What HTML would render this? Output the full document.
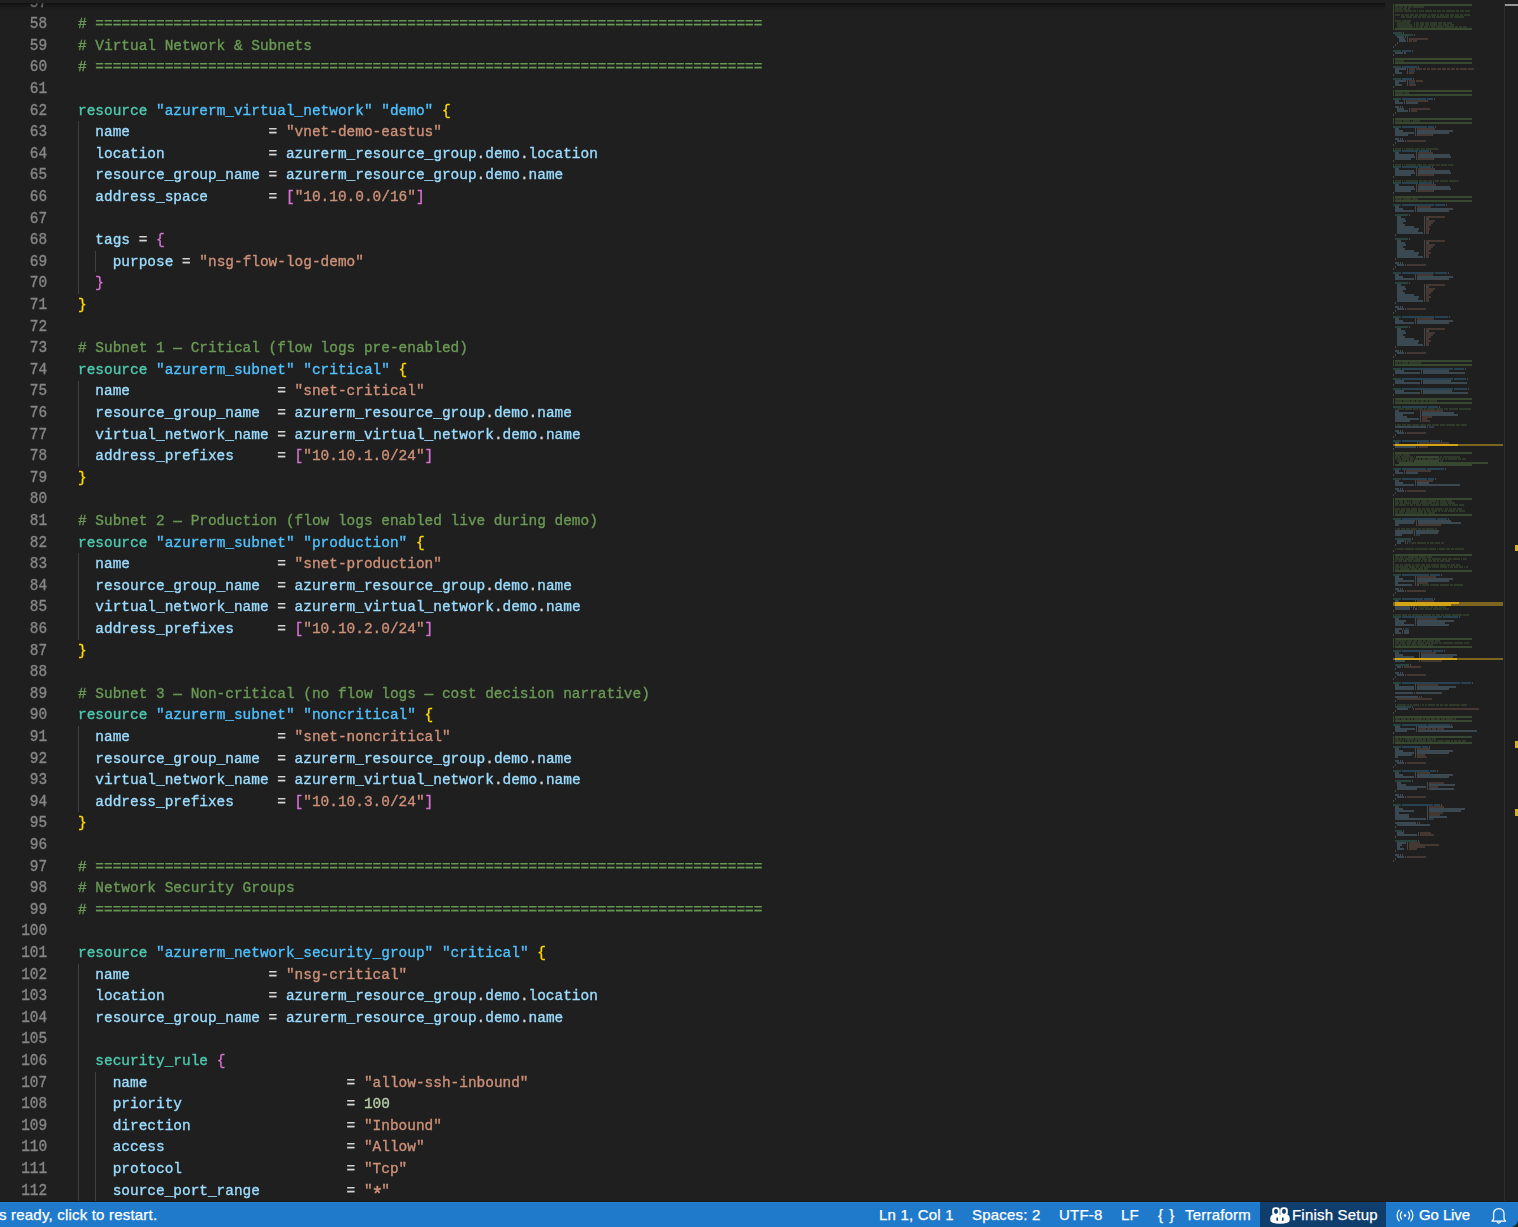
<!DOCTYPE html>
<html><head><meta charset="utf-8"><style>
*{margin:0;padding:0;box-sizing:border-box}
html,body{width:1518px;height:1227px;overflow:hidden;background:#1f1f1f}
body{position:relative;font-family:"Liberation Mono",monospace}
.ed{will-change:transform}
.ln,.nm{transform:scaleY(1.08);transform-origin:0 14.65px;-webkit-text-stroke:0.35px currentColor}
.ln{transform:scaleY(1.0)}
.ed{position:absolute;left:0;top:3px;width:1385px;height:1199px;overflow:hidden;background:#1f1f1f}
.ln,.nm{position:absolute;height:21.6px;line-height:21.6px;font-size:14.45px;white-space:pre;color:#d4d4d4}
.ln{left:78.0px}
.nm{left:0;width:47.2px;text-align:right;color:#858585}
.gd{position:absolute;width:1px;background:#3e4044}
.c{color:#6a9955}.k{color:#4ec9b0}.t{color:#4fc1ff}.a{color:#9cdcfe}.s{color:#ce9178}.n{color:#b5cea8}
.ast{display:inline-block;transform:translateY(4.5px) scale(1.35)}
.b1{color:#ffd700}.b2{color:#da70d6}.b3{color:#179fff}
.shadow{position:absolute;left:0;top:0;width:1385px;height:6px;box-shadow:inset 0 6px 6px -6px #000}
.mm{position:absolute;left:1385px;top:0;width:120px;height:1202px;background:#1f1f1f}
.ruler{position:absolute;left:1504px;top:3px;width:14px;height:1199px;border-left:1px solid #2e2e2e}
.mmsvg{position:absolute;left:0;top:0}
.sb{position:absolute;left:0;top:1202px;width:1518px;height:25px;background:#1f7acc;color:#fff;font-family:"Liberation Sans",sans-serif;font-size:15px;line-height:25px;white-space:pre}
.sb .br{font-family:"Liberation Sans",sans-serif;font-size:15px;letter-spacing:1px}
.sb span{position:absolute;top:0;-webkit-text-stroke:0.25px #fff;letter-spacing:0.2px}
</style></head><body>
<div class="ed">
<div class="nm" style="top:-10.50px">57</div>
<div class="nm" style="top:11.10px">58</div>
<div class="nm" style="top:32.70px">59</div>
<div class="nm" style="top:54.30px">60</div>
<div class="nm" style="top:75.90px">61</div>
<div class="nm" style="top:97.50px">62</div>
<div class="nm" style="top:119.10px">63</div>
<div class="nm" style="top:140.70px">64</div>
<div class="nm" style="top:162.30px">65</div>
<div class="nm" style="top:183.90px">66</div>
<div class="nm" style="top:205.50px">67</div>
<div class="nm" style="top:227.10px">68</div>
<div class="nm" style="top:248.70px">69</div>
<div class="nm" style="top:270.30px">70</div>
<div class="nm" style="top:291.90px">71</div>
<div class="nm" style="top:313.50px">72</div>
<div class="nm" style="top:335.10px">73</div>
<div class="nm" style="top:356.70px">74</div>
<div class="nm" style="top:378.30px">75</div>
<div class="nm" style="top:399.90px">76</div>
<div class="nm" style="top:421.50px">77</div>
<div class="nm" style="top:443.10px">78</div>
<div class="nm" style="top:464.70px">79</div>
<div class="nm" style="top:486.30px">80</div>
<div class="nm" style="top:507.90px">81</div>
<div class="nm" style="top:529.50px">82</div>
<div class="nm" style="top:551.10px">83</div>
<div class="nm" style="top:572.70px">84</div>
<div class="nm" style="top:594.30px">85</div>
<div class="nm" style="top:615.90px">86</div>
<div class="nm" style="top:637.50px">87</div>
<div class="nm" style="top:659.10px">88</div>
<div class="nm" style="top:680.70px">89</div>
<div class="nm" style="top:702.30px">90</div>
<div class="nm" style="top:723.90px">91</div>
<div class="nm" style="top:745.50px">92</div>
<div class="nm" style="top:767.10px">93</div>
<div class="nm" style="top:788.70px">94</div>
<div class="nm" style="top:810.30px">95</div>
<div class="nm" style="top:831.90px">96</div>
<div class="nm" style="top:853.50px">97</div>
<div class="nm" style="top:875.10px">98</div>
<div class="nm" style="top:896.70px">99</div>
<div class="nm" style="top:918.30px">100</div>
<div class="nm" style="top:939.90px">101</div>
<div class="nm" style="top:961.50px">102</div>
<div class="nm" style="top:983.10px">103</div>
<div class="nm" style="top:1004.70px">104</div>
<div class="nm" style="top:1026.30px">105</div>
<div class="nm" style="top:1047.90px">106</div>
<div class="nm" style="top:1069.50px">107</div>
<div class="nm" style="top:1091.10px">108</div>
<div class="nm" style="top:1112.70px">109</div>
<div class="nm" style="top:1134.30px">110</div>
<div class="nm" style="top:1155.90px">111</div>
<div class="nm" style="top:1177.50px">112</div>
<div class="nm" style="top:1199.10px">113</div>
<div class="gd" style="left:78.00px;top:118.30px;height:172.80px"></div>
<div class="gd" style="left:95.34px;top:247.90px;height:21.60px"></div>
<div class="gd" style="left:78.00px;top:377.50px;height:86.40px"></div>
<div class="gd" style="left:78.00px;top:550.30px;height:86.40px"></div>
<div class="gd" style="left:78.00px;top:723.10px;height:86.40px"></div>
<div class="gd" style="left:78.00px;top:960.70px;height:259.20px"></div>
<div class="gd" style="left:95.34px;top:1068.70px;height:151.20px"></div>
<div class="ln" style="top:-10.50px"><span class="c"></span></div>
<div class="ln" style="top:11.10px"><span class="c"># =============================================================================</span></div>
<div class="ln" style="top:32.70px"><span class="c"># Virtual Network &amp; Subnets</span></div>
<div class="ln" style="top:54.30px"><span class="c"># =============================================================================</span></div>
<div class="ln" style="top:75.90px"></div>
<div class="ln" style="top:97.50px"><span class="k">resource</span> <span class="t">&quot;azurerm_virtual_network&quot;</span> <span class="t">&quot;demo&quot;</span> <span class="b1">{</span></div>
<div class="ln" style="top:119.10px">  <span class="a">name</span>                = <span class="s">&quot;vnet-demo-eastus&quot;</span></div>
<div class="ln" style="top:140.70px">  <span class="a">location</span>            = <span class="a">azurerm_resource_group</span>.<span class="a">demo</span>.<span class="a">location</span></div>
<div class="ln" style="top:162.30px">  <span class="a">resource_group_name</span> = <span class="a">azurerm_resource_group</span>.<span class="a">demo</span>.<span class="a">name</span></div>
<div class="ln" style="top:183.90px">  <span class="a">address_space</span>       = <span class="b2">[</span><span class="s">&quot;10.10.0.0/16&quot;</span><span class="b2">]</span></div>
<div class="ln" style="top:205.50px"></div>
<div class="ln" style="top:227.10px">  <span class="a">tags</span> = <span class="b2">{</span></div>
<div class="ln" style="top:248.70px">    <span class="a">purpose</span> = <span class="s">&quot;nsg-flow-log-demo&quot;</span></div>
<div class="ln" style="top:270.30px">  <span class="b2">}</span></div>
<div class="ln" style="top:291.90px"><span class="b1">}</span></div>
<div class="ln" style="top:313.50px"></div>
<div class="ln" style="top:335.10px"><span class="c"># Subnet 1 — Critical (flow logs pre-enabled)</span></div>
<div class="ln" style="top:356.70px"><span class="k">resource</span> <span class="t">&quot;azurerm_subnet&quot;</span> <span class="t">&quot;critical&quot;</span> <span class="b1">{</span></div>
<div class="ln" style="top:378.30px">  <span class="a">name</span>                 = <span class="s">&quot;snet-critical&quot;</span></div>
<div class="ln" style="top:399.90px">  <span class="a">resource_group_name</span>  = <span class="a">azurerm_resource_group</span>.<span class="a">demo</span>.<span class="a">name</span></div>
<div class="ln" style="top:421.50px">  <span class="a">virtual_network_name</span> = <span class="a">azurerm_virtual_network</span>.<span class="a">demo</span>.<span class="a">name</span></div>
<div class="ln" style="top:443.10px">  <span class="a">address_prefixes</span>     = <span class="b2">[</span><span class="s">&quot;10.10.1.0/24&quot;</span><span class="b2">]</span></div>
<div class="ln" style="top:464.70px"><span class="b1">}</span></div>
<div class="ln" style="top:486.30px"></div>
<div class="ln" style="top:507.90px"><span class="c"># Subnet 2 — Production (flow logs enabled live during demo)</span></div>
<div class="ln" style="top:529.50px"><span class="k">resource</span> <span class="t">&quot;azurerm_subnet&quot;</span> <span class="t">&quot;production&quot;</span> <span class="b1">{</span></div>
<div class="ln" style="top:551.10px">  <span class="a">name</span>                 = <span class="s">&quot;snet-production&quot;</span></div>
<div class="ln" style="top:572.70px">  <span class="a">resource_group_name</span>  = <span class="a">azurerm_resource_group</span>.<span class="a">demo</span>.<span class="a">name</span></div>
<div class="ln" style="top:594.30px">  <span class="a">virtual_network_name</span> = <span class="a">azurerm_virtual_network</span>.<span class="a">demo</span>.<span class="a">name</span></div>
<div class="ln" style="top:615.90px">  <span class="a">address_prefixes</span>     = <span class="b2">[</span><span class="s">&quot;10.10.2.0/24&quot;</span><span class="b2">]</span></div>
<div class="ln" style="top:637.50px"><span class="b1">}</span></div>
<div class="ln" style="top:659.10px"></div>
<div class="ln" style="top:680.70px"><span class="c"># Subnet 3 — Non-critical (no flow logs — cost decision narrative)</span></div>
<div class="ln" style="top:702.30px"><span class="k">resource</span> <span class="t">&quot;azurerm_subnet&quot;</span> <span class="t">&quot;noncritical&quot;</span> <span class="b1">{</span></div>
<div class="ln" style="top:723.90px">  <span class="a">name</span>                 = <span class="s">&quot;snet-noncritical&quot;</span></div>
<div class="ln" style="top:745.50px">  <span class="a">resource_group_name</span>  = <span class="a">azurerm_resource_group</span>.<span class="a">demo</span>.<span class="a">name</span></div>
<div class="ln" style="top:767.10px">  <span class="a">virtual_network_name</span> = <span class="a">azurerm_virtual_network</span>.<span class="a">demo</span>.<span class="a">name</span></div>
<div class="ln" style="top:788.70px">  <span class="a">address_prefixes</span>     = <span class="b2">[</span><span class="s">&quot;10.10.3.0/24&quot;</span><span class="b2">]</span></div>
<div class="ln" style="top:810.30px"><span class="b1">}</span></div>
<div class="ln" style="top:831.90px"></div>
<div class="ln" style="top:853.50px"><span class="c"># =============================================================================</span></div>
<div class="ln" style="top:875.10px"><span class="c"># Network Security Groups</span></div>
<div class="ln" style="top:896.70px"><span class="c"># =============================================================================</span></div>
<div class="ln" style="top:918.30px"></div>
<div class="ln" style="top:939.90px"><span class="k">resource</span> <span class="t">&quot;azurerm_network_security_group&quot;</span> <span class="t">&quot;critical&quot;</span> <span class="b1">{</span></div>
<div class="ln" style="top:961.50px">  <span class="a">name</span>                = <span class="s">&quot;nsg-critical&quot;</span></div>
<div class="ln" style="top:983.10px">  <span class="a">location</span>            = <span class="a">azurerm_resource_group</span>.<span class="a">demo</span>.<span class="a">location</span></div>
<div class="ln" style="top:1004.70px">  <span class="a">resource_group_name</span> = <span class="a">azurerm_resource_group</span>.<span class="a">demo</span>.<span class="a">name</span></div>
<div class="ln" style="top:1026.30px"></div>
<div class="ln" style="top:1047.90px">  <span class="k">security_rule</span> <span class="b2">{</span></div>
<div class="ln" style="top:1069.50px">    <span class="a">name</span>                       = <span class="s">&quot;allow-ssh-inbound&quot;</span></div>
<div class="ln" style="top:1091.10px">    <span class="a">priority</span>                   = <span class="n">100</span></div>
<div class="ln" style="top:1112.70px">    <span class="a">direction</span>                  = <span class="s">&quot;Inbound&quot;</span></div>
<div class="ln" style="top:1134.30px">    <span class="a">access</span>                     = <span class="s">&quot;Allow&quot;</span></div>
<div class="ln" style="top:1155.90px">    <span class="a">protocol</span>                   = <span class="s">&quot;Tcp&quot;</span></div>
<div class="ln" style="top:1177.50px">    <span class="a">source_port_range</span>          = <span class="s">&quot;<span class="ast">*</span>&quot;</span></div>
<div class="ln" style="top:1199.10px">    <span class="a">destination_port_range</span>     = <span class="s">&quot;22&quot;</span></div>
<div class="shadow"></div>
</div>
<div class="mm"></div>
<svg class="mmsvg" width="1518" height="1202" viewBox="0 0 1518 1202">
<g><path fill="#6a9955" opacity="0.30" d="M1395 6.2h3v1.6h-3zM1399 6.2h4v1.6h-4zM1404 6.2h3v1.6h-3zM1408 6.2h4v1.6h-4zM1413 6.2h11v1.6h-11zM1395 8.2h7v1.6h-7zM1403 8.2h4v1.6h-4zM1408 8.2h2v1.6h-2zM1395 10.2h8v1.6h-8zM1404 10.2h8v1.6h-8zM1413 10.2h3v1.6h-3zM1417 10.2h1v1.6h-1zM1419 10.2h5v1.6h-5zM1425 10.2h7v1.6h-7zM1433 10.2h3v1.6h-3zM1437 10.2h4v1.6h-4zM1442 10.2h3v1.6h-3zM1446 10.2h9v1.6h-9zM1456 10.2h3v1.6h-3zM1460 10.2h4v1.6h-4zM1465 10.2h5v1.6h-5zM1395 14.2h5v1.6h-5zM1401 14.2h3v1.6h-3zM1405 14.2h4v1.6h-4zM1410 14.2h4v1.6h-4zM1415 14.2h3v1.6h-3zM1419 14.2h8v1.6h-8zM1428 14.2h2v1.6h-2zM1431 14.2h5v1.6h-5zM1437 14.2h2v1.6h-2zM1440 14.2h4v1.6h-4zM1445 14.2h4v1.6h-4zM1450 14.2h4v1.6h-4zM1455 14.2h4v1.6h-4zM1460 14.2h3v1.6h-3zM1464 14.2h6v1.6h-6zM1401 16.2h4v1.6h-4zM1406 16.2h6v1.6h-6zM1413 16.2h4v1.6h-4zM1418 16.2h3v1.6h-3zM1422 16.2h4v1.6h-4zM1427 16.2h4v1.6h-4zM1432 16.2h3v1.6h-3zM1436 16.2h13v1.6h-13zM1450 16.2h3v1.6h-3zM1454 16.2h10v1.6h-10zM1395 20.2h6v1.6h-6zM1402 20.2h9v1.6h-9zM1397 22.2h13v1.6h-13zM1414 22.2h1v1.6h-1zM1416 22.2h3v1.6h-3zM1420 22.2h4v1.6h-4zM1425 22.2h4v1.6h-4zM1430 22.2h7v1.6h-7zM1438 22.2h4v1.6h-4zM1443 22.2h3v1.6h-3zM1447 22.2h5v1.6h-5zM1397 24.2h15v1.6h-15zM1414 24.2h1v1.6h-1zM1416 24.2h3v1.6h-3zM1420 24.2h4v1.6h-4zM1425 24.2h4v1.6h-4zM1430 24.2h7v1.6h-7zM1438 24.2h4v1.6h-4zM1443 24.2h6v1.6h-6zM1450 24.2h4v1.6h-4zM1397 26.2h16v1.6h-16zM1414 26.2h1v1.6h-1zM1416 26.2h2v1.6h-2zM1419 26.2h4v1.6h-4zM1424 26.2h4v1.6h-4zM1429 26.2h1v1.6h-1zM1431 26.2h4v1.6h-4zM1436 26.2h8v1.6h-8zM1445 26.2h9v1.6h-9zM1455 26.2h3v1.6h-3zM1459 26.2h3v1.6h-3zM1463 26.2h4v1.6h-4zM1395 60.2h9v1.6h-9zM1395 92.2h8v1.6h-8zM1404 92.2h5v1.6h-5zM1395 120.2h7v1.6h-7zM1403 120.2h7v1.6h-7zM1411 120.2h1v1.6h-1zM1413 120.2h7v1.6h-7zM1395 148.2h6v1.6h-6zM1402 148.2h1v1.6h-1zM1404 148.2h1v1.6h-1zM1406 148.2h8v1.6h-8zM1415 148.2h5v1.6h-5zM1421 148.2h4v1.6h-4zM1426 148.2h12v1.6h-12zM1395 164.2h6v1.6h-6zM1402 164.2h1v1.6h-1zM1404 164.2h1v1.6h-1zM1406 164.2h10v1.6h-10zM1417 164.2h5v1.6h-5zM1423 164.2h4v1.6h-4zM1428 164.2h7v1.6h-7zM1436 164.2h4v1.6h-4zM1441 164.2h6v1.6h-6zM1448 164.2h5v1.6h-5zM1395 180.2h6v1.6h-6zM1402 180.2h1v1.6h-1zM1404 180.2h1v1.6h-1zM1406 180.2h12v1.6h-12zM1419 180.2h3v1.6h-3zM1423 180.2h4v1.6h-4zM1428 180.2h4v1.6h-4zM1433 180.2h1v1.6h-1zM1435 180.2h4v1.6h-4zM1440 180.2h8v1.6h-8zM1449 180.2h10v1.6h-10zM1395 198.2h7v1.6h-7zM1403 198.2h8v1.6h-8zM1412 198.2h6v1.6h-6zM1395 362.2h3v1.6h-3zM1399 362.2h2v1.6h-2zM1402 362.2h6v1.6h-6zM1409 362.2h12v1.6h-12zM1395 400.2h7v1.6h-7zM1403 400.2h7v1.6h-7zM1411 400.2h4v1.6h-4zM1416 400.2h3v1.6h-3zM1420 400.2h4v1.6h-4zM1425 400.2h3v1.6h-3zM1429 400.2h8v1.6h-8zM1395 408.2h1v1.6h-1zM1397 408.2h7v1.6h-7zM1405 408.2h7v1.6h-7zM1413 408.2h5v1.6h-5zM1419 408.2h4v1.6h-4zM1424 408.2h2v1.6h-2zM1427 408.2h8v1.6h-8zM1436 408.2h7v1.6h-7zM1444 408.2h4v1.6h-4zM1449 408.2h9v1.6h-9zM1459 408.2h12v1.6h-12zM1395 424.2h1v1.6h-1zM1397 424.2h4v1.6h-4zM1402 424.2h4v1.6h-4zM1407 424.2h4v1.6h-4zM1412 424.2h7v1.6h-7zM1420 424.2h6v1.6h-6zM1427 424.2h4v1.6h-4zM1432 424.2h7v1.6h-7zM1440 424.2h5v1.6h-5zM1446 424.2h9v1.6h-9zM1456 424.2h4v1.6h-4zM1461 424.2h6v1.6h-6zM1395 454.2h7v1.6h-7zM1403 454.2h7v1.6h-7zM1395 456.2h5v1.6h-5zM1401 456.2h12v1.6h-12zM1414 456.2h1v1.6h-1zM1440 456.2h2v1.6h-2zM1443 456.2h17v1.6h-17zM1395 458.2h2v1.6h-2zM1398 458.2h3v1.6h-3zM1402 458.2h7v1.6h-7zM1410 458.2h4v1.6h-4zM1415 458.2h3v1.6h-3zM1419 458.2h2v1.6h-2zM1422 458.2h4v1.6h-4zM1427 458.2h7v1.6h-7zM1435 458.2h6v1.6h-6zM1442 458.2h2v1.6h-2zM1445 458.2h2v1.6h-2zM1448 458.2h9v1.6h-9zM1458 458.2h3v1.6h-3zM1462 458.2h4v1.6h-4zM1397 460.2h9v1.6h-9zM1407 460.2h6v1.6h-6zM1440 460.2h3v1.6h-3zM1395 500.2h3v1.6h-3zM1399 500.2h4v1.6h-4zM1404 500.2h3v1.6h-3zM1408 500.2h1v1.6h-1zM1410 500.2h1v1.6h-1zM1412 500.2h8v1.6h-8zM1421 500.2h6v1.6h-6zM1428 500.2h8v1.6h-8zM1437 500.2h2v1.6h-2zM1440 500.2h6v1.6h-6zM1447 500.2h5v1.6h-5zM1395 502.2h4v1.6h-4zM1400 502.2h3v1.6h-3zM1404 502.2h7v1.6h-7zM1412 502.2h7v1.6h-7zM1420 502.2h12v1.6h-12zM1433 502.2h2v1.6h-2zM1436 502.2h3v1.6h-3zM1440 502.2h7v1.6h-7zM1448 502.2h7v1.6h-7zM1395 504.2h3v1.6h-3zM1399 504.2h7v1.6h-7zM1407 504.2h2v1.6h-2zM1410 504.2h3v1.6h-3zM1414 504.2h1v1.6h-1zM1416 504.2h5v1.6h-5zM1422 504.2h7v1.6h-7zM1430 504.2h9v1.6h-9zM1440 504.2h8v1.6h-8zM1449 504.2h2v1.6h-2zM1452 504.2h6v1.6h-6zM1459 504.2h5v1.6h-5zM1395 508.2h5v1.6h-5zM1401 508.2h4v1.6h-4zM1406 508.2h4v1.6h-4zM1411 508.2h6v1.6h-6zM1418 508.2h3v1.6h-3zM1422 508.2h3v1.6h-3zM1426 508.2h4v1.6h-4zM1431 508.2h3v1.6h-3zM1435 508.2h7v1.6h-7zM1443 508.2h1v1.6h-1zM1445 508.2h3v1.6h-3zM1449 508.2h3v1.6h-3zM1453 508.2h3v1.6h-3zM1457 508.2h5v1.6h-5zM1395 510.2h3v1.6h-3zM1399 510.2h6v1.6h-6zM1406 510.2h11v1.6h-11zM1418 510.2h5v1.6h-5zM1424 510.2h2v1.6h-2zM1427 510.2h4v1.6h-4zM1432 510.2h5v1.6h-5zM1438 510.2h2v1.6h-2zM1441 510.2h2v1.6h-2zM1444 510.2h3v1.6h-3zM1448 510.2h7v1.6h-7zM1456 510.2h2v1.6h-2zM1459 510.2h6v1.6h-6zM1395 512.2h3v1.6h-3zM1399 512.2h5v1.6h-5zM1405 512.2h18v1.6h-18zM1424 512.2h3v1.6h-3zM1428 512.2h7v1.6h-7zM1395 528.2h1v1.6h-1zM1397 528.2h3v1.6h-3zM1401 528.2h4v1.6h-4zM1406 528.2h4v1.6h-4zM1411 528.2h6v1.6h-6zM1418 528.2h3v1.6h-3zM1422 528.2h3v1.6h-3zM1426 528.2h8v1.6h-8zM1435 528.2h2v1.6h-2zM1409 542.2h1v1.6h-1zM1411 542.2h5v1.6h-5zM1417 542.2h9v1.6h-9zM1427 542.2h2v1.6h-2zM1430 542.2h4v1.6h-4zM1435 542.2h5v1.6h-5zM1441 542.2h3v1.6h-3zM1395 548.2h1v1.6h-1zM1397 548.2h7v1.6h-7zM1405 548.2h9v1.6h-9zM1415 548.2h13v1.6h-13zM1429 548.2h7v1.6h-7zM1437 548.2h1v1.6h-1zM1439 548.2h6v1.6h-6zM1446 548.2h4v1.6h-4zM1451 548.2h3v1.6h-3zM1455 548.2h9v1.6h-9zM1395 556.2h4v1.6h-4zM1400 556.2h3v1.6h-3zM1404 556.2h1v1.6h-1zM1406 556.2h1v1.6h-1zM1408 556.2h10v1.6h-10zM1419 556.2h7v1.6h-7zM1427 556.2h5v1.6h-5zM1395 558.2h9v1.6h-9zM1405 558.2h9v1.6h-9zM1415 558.2h6v1.6h-6zM1422 558.2h5v1.6h-5zM1428 558.2h3v1.6h-3zM1432 558.2h9v1.6h-9zM1442 558.2h5v1.6h-5zM1448 558.2h4v1.6h-4zM1453 558.2h7v1.6h-7zM1461 558.2h1v1.6h-1zM1463 558.2h4v1.6h-4zM1395 560.2h2v1.6h-2zM1398 560.2h4v1.6h-4zM1403 560.2h4v1.6h-4zM1408 560.2h4v1.6h-4zM1413 560.2h7v1.6h-7zM1421 560.2h2v1.6h-2zM1424 560.2h3v1.6h-3zM1428 560.2h4v1.6h-4zM1433 560.2h3v1.6h-3zM1437 560.2h2v1.6h-2zM1440 560.2h4v1.6h-4zM1445 560.2h5v1.6h-5zM1395 564.2h4v1.6h-4zM1400 564.2h3v1.6h-3zM1404 564.2h7v1.6h-7zM1412 564.2h2v1.6h-2zM1415 564.2h5v1.6h-5zM1421 564.2h4v1.6h-4zM1426 564.2h4v1.6h-4zM1431 564.2h8v1.6h-8zM1440 564.2h6v1.6h-6zM1447 564.2h3v1.6h-3zM1451 564.2h4v1.6h-4zM1456 564.2h4v1.6h-4zM1395 566.2h13v1.6h-13zM1409 566.2h6v1.6h-6zM1416 566.2h3v1.6h-3zM1420 566.2h3v1.6h-3zM1424 566.2h7v1.6h-7zM1432 566.2h7v1.6h-7zM1440 566.2h7v1.6h-7zM1448 566.2h1v1.6h-1zM1450 566.2h3v1.6h-3zM1454 566.2h4v1.6h-4zM1459 566.2h4v1.6h-4zM1464 566.2h1v1.6h-1zM1466 566.2h2v1.6h-2zM1395 568.2h4v1.6h-4zM1400 568.2h10v1.6h-10zM1411 568.2h6v1.6h-6zM1418 568.2h5v1.6h-5zM1424 568.2h4v1.6h-4zM1420 584.2h1v1.6h-1zM1422 584.2h7v1.6h-7zM1430 584.2h9v1.6h-9zM1440 584.2h9v1.6h-9zM1450 584.2h3v1.6h-3zM1454 584.2h9v1.6h-9zM1416 606.2h1v1.6h-1zM1418 606.2h11v1.6h-11zM1430 606.2h3v1.6h-3zM1434 606.2h4v1.6h-4zM1439 606.2h7v1.6h-7zM1418 608.2h1v1.6h-1zM1420 608.2h4v1.6h-4zM1425 608.2h7v1.6h-7zM1433 608.2h9v1.6h-9zM1443 608.2h6v1.6h-6zM1395 614.2h6v1.6h-6zM1402 614.2h5v1.6h-5zM1408 614.2h3v1.6h-3zM1412 614.2h10v1.6h-10zM1423 614.2h8v1.6h-8zM1432 614.2h3v1.6h-3zM1436 614.2h4v1.6h-4zM1441 614.2h3v1.6h-3zM1445 614.2h6v1.6h-6zM1452 614.2h10v1.6h-10zM1463 614.2h6v1.6h-6zM1395 640.2h11v1.6h-11zM1407 640.2h5v1.6h-5zM1413 640.2h4v1.6h-4zM1418 640.2h4v1.6h-4zM1423 640.2h3v1.6h-3zM1427 640.2h7v1.6h-7zM1435 640.2h5v1.6h-5zM1395 642.2h4v1.6h-4zM1400 642.2h5v1.6h-5zM1406 642.2h5v1.6h-5zM1412 642.2h4v1.6h-4zM1417 642.2h7v1.6h-7zM1425 642.2h5v1.6h-5zM1431 642.2h7v1.6h-7zM1439 642.2h3v1.6h-3zM1443 642.2h10v1.6h-10zM1454 642.2h9v1.6h-9zM1464 642.2h5v1.6h-5zM1395 644.2h2v1.6h-2zM1398 644.2h3v1.6h-3zM1402 644.2h4v1.6h-4zM1407 644.2h3v1.6h-3zM1411 644.2h6v1.6h-6zM1418 644.2h9v1.6h-9zM1428 644.2h5v1.6h-5zM1395 704.2h1v1.6h-1zM1397 704.2h9v1.6h-9zM1407 704.2h2v1.6h-2zM1410 704.2h2v1.6h-2zM1413 704.2h6v1.6h-6zM1420 704.2h1v1.6h-1zM1422 704.2h2v1.6h-2zM1425 704.2h2v1.6h-2zM1428 704.2h7v1.6h-7zM1436 704.2h3v1.6h-3zM1440 704.2h3v1.6h-3zM1444 704.2h4v1.6h-4zM1449 704.2h11v1.6h-11zM1461 704.2h6v1.6h-6zM1395 718.2h5v1.6h-5zM1401 718.2h5v1.6h-5zM1407 718.2h3v1.6h-3zM1411 718.2h2v1.6h-2zM1414 718.2h8v1.6h-8zM1423 718.2h2v1.6h-2zM1426 718.2h4v1.6h-4zM1431 718.2h4v1.6h-4zM1436 718.2h4v1.6h-4zM1441 718.2h4v1.6h-4zM1446 718.2h7v1.6h-7zM1454 718.2h2v1.6h-2zM1395 738.2h4v1.6h-4zM1400 738.2h2v1.6h-2zM1403 738.2h1v1.6h-1zM1405 738.2h9v1.6h-9zM1415 738.2h7v1.6h-7zM1423 738.2h3v1.6h-3zM1427 738.2h4v1.6h-4zM1432 738.2h4v1.6h-4zM1395 740.2h6v1.6h-6zM1402 740.2h2v1.6h-2zM1405 740.2h1v1.6h-1zM1407 740.2h3v1.6h-3zM1411 740.2h2v1.6h-2zM1414 740.2h3v1.6h-3zM1418 740.2h8v1.6h-8zM1427 740.2h6v1.6h-6zM1434 740.2h2v1.6h-2zM1437 740.2h7v1.6h-7zM1445 740.2h5v1.6h-5zM1451 740.2h2v1.6h-2zM1454 740.2h3v1.6h-3zM1458 740.2h3v1.6h-3zM1462 740.2h4v1.6h-4z"/><path fill="#6a9955" opacity="0.45" d="M1393 4.2h1v1.6h-1zM1395 4.2h77v1.6h-77zM1393 6.2h1v1.6h-1zM1393 8.2h1v1.6h-1zM1393 10.2h1v1.6h-1zM1393 12.2h1v1.6h-1zM1393 14.2h1v1.6h-1zM1393 16.2h1v1.6h-1zM1393 18.2h1v1.6h-1zM1393 20.2h1v1.6h-1zM1393 22.2h1v1.6h-1zM1393 24.2h1v1.6h-1zM1393 26.2h1v1.6h-1zM1393 28.2h1v1.6h-1zM1395 28.2h77v1.6h-77zM1393 58.2h1v1.6h-1zM1395 58.2h77v1.6h-77zM1393 60.2h1v1.6h-1zM1393 62.2h1v1.6h-1zM1395 62.2h77v1.6h-77zM1393 90.2h1v1.6h-1zM1395 90.2h77v1.6h-77zM1393 92.2h1v1.6h-1zM1393 94.2h1v1.6h-1zM1395 94.2h77v1.6h-77zM1393 118.2h1v1.6h-1zM1395 118.2h77v1.6h-77zM1393 120.2h1v1.6h-1zM1393 122.2h1v1.6h-1zM1395 122.2h77v1.6h-77zM1393 148.2h1v1.6h-1zM1393 164.2h1v1.6h-1zM1393 180.2h1v1.6h-1zM1393 196.2h1v1.6h-1zM1395 196.2h77v1.6h-77zM1393 198.2h1v1.6h-1zM1393 200.2h1v1.6h-1zM1395 200.2h77v1.6h-77zM1393 360.2h1v1.6h-1zM1395 360.2h77v1.6h-77zM1393 362.2h1v1.6h-1zM1393 364.2h1v1.6h-1zM1395 364.2h77v1.6h-77zM1393 398.2h1v1.6h-1zM1395 398.2h77v1.6h-77zM1393 400.2h1v1.6h-1zM1393 402.2h1v1.6h-1zM1395 402.2h77v1.6h-77zM1393 452.2h1v1.6h-1zM1395 452.2h77v1.6h-77zM1393 454.2h1v1.6h-1zM1393 456.2h1v1.6h-1zM1416 456.2h23v1.6h-23zM1393 458.2h1v1.6h-1zM1393 460.2h1v1.6h-1zM1414 460.2h25v1.6h-25zM1393 462.2h1v1.6h-1zM1399 462.2h89v1.6h-89zM1393 464.2h1v1.6h-1zM1395 464.2h77v1.6h-77zM1393 498.2h1v1.6h-1zM1395 498.2h77v1.6h-77zM1393 500.2h1v1.6h-1zM1393 502.2h1v1.6h-1zM1393 504.2h1v1.6h-1zM1393 506.2h1v1.6h-1zM1393 508.2h1v1.6h-1zM1393 510.2h1v1.6h-1zM1393 512.2h1v1.6h-1zM1393 514.2h1v1.6h-1zM1395 514.2h77v1.6h-77zM1393 554.2h1v1.6h-1zM1395 554.2h77v1.6h-77zM1393 556.2h1v1.6h-1zM1393 558.2h1v1.6h-1zM1393 560.2h1v1.6h-1zM1393 562.2h1v1.6h-1zM1393 564.2h1v1.6h-1zM1393 566.2h1v1.6h-1zM1393 568.2h1v1.6h-1zM1393 570.2h1v1.6h-1zM1395 570.2h77v1.6h-77zM1393 614.2h1v1.6h-1zM1393 638.2h1v1.6h-1zM1395 638.2h77v1.6h-77zM1393 640.2h1v1.6h-1zM1393 642.2h1v1.6h-1zM1393 644.2h1v1.6h-1zM1393 646.2h1v1.6h-1zM1395 646.2h77v1.6h-77zM1393 716.2h1v1.6h-1zM1395 716.2h77v1.6h-77zM1393 718.2h1v1.6h-1zM1393 720.2h1v1.6h-1zM1395 720.2h77v1.6h-77zM1393 736.2h1v1.6h-1zM1395 736.2h77v1.6h-77zM1393 738.2h1v1.6h-1zM1393 740.2h1v1.6h-1zM1393 742.2h1v1.6h-1zM1395 742.2h77v1.6h-77z"/><path fill="#4ec9b0" opacity="0.30" d="M1393 32.2h9v1.6h-9zM1395 34.2h18v1.6h-18zM1393 50.2h8v1.6h-8zM1393 66.2h8v1.6h-8zM1393 78.2h8v1.6h-8zM1393 98.2h8v1.6h-8zM1393 126.2h8v1.6h-8zM1393 150.2h8v1.6h-8zM1393 166.2h8v1.6h-8zM1393 182.2h8v1.6h-8zM1393 204.2h8v1.6h-8zM1395 214.2h13v1.6h-13zM1395 238.2h13v1.6h-13zM1393 272.2h8v1.6h-8zM1395 282.2h13v1.6h-13zM1393 316.2h8v1.6h-8zM1395 326.2h13v1.6h-13zM1393 368.2h8v1.6h-8zM1393 378.2h8v1.6h-8zM1393 388.2h8v1.6h-8zM1393 406.2h8v1.6h-8zM1393 440.2h8v1.6h-8zM1393 468.2h8v1.6h-8zM1393 478.2h8v1.6h-8zM1393 518.2h8v1.6h-8zM1395 538.2h16v1.6h-16zM1393 574.2h8v1.6h-8zM1393 598.2h8v1.6h-8zM1393 616.2h8v1.6h-8zM1393 650.2h8v1.6h-8zM1395 664.2h14v1.6h-14zM1393 682.2h8v1.6h-8zM1395 706.2h16v1.6h-16zM1393 724.2h8v1.6h-8zM1393 746.2h8v1.6h-8zM1393 770.2h8v1.6h-8zM1395 780.2h16v1.6h-16zM1393 804.2h8v1.6h-8zM1395 830.2h7v1.6h-7zM1395 840.2h22v1.6h-22z"/><path fill="#d4d4d4" opacity="0.30" d="M1403 32.2h1v1.6h-1zM1414 34.2h1v1.6h-1zM1405 36.2h1v1.6h-1zM1407 36.2h1v1.6h-1zM1407 38.2h1v1.6h-1zM1407 40.2h1v1.6h-1zM1397 42.2h1v1.6h-1zM1395 44.2h1v1.6h-1zM1393 46.2h1v1.6h-1zM1412 50.2h1v1.6h-1zM1404 52.2h1v1.6h-1zM1405 52.2h1v1.6h-1zM1393 54.2h1v1.6h-1zM1418 66.2h1v1.6h-1zM1407 68.2h1v1.6h-1zM1407 70.2h1v1.6h-1zM1407 72.2h1v1.6h-1zM1393 74.2h1v1.6h-1zM1413 78.2h1v1.6h-1zM1407 80.2h1v1.6h-1zM1407 82.2h1v1.6h-1zM1407 84.2h1v1.6h-1zM1393 86.2h1v1.6h-1zM1434 98.2h1v1.6h-1zM1404 100.2h1v1.6h-1zM1404 102.2h1v1.6h-1zM1409 102.2h1v1.6h-1zM1400 106.2h1v1.6h-1zM1402 106.2h1v1.6h-1zM1409 108.2h1v1.6h-1zM1409 110.2h1v1.6h-1zM1395 112.2h1v1.6h-1zM1393 114.2h1v1.6h-1zM1435 126.2h1v1.6h-1zM1415 128.2h1v1.6h-1zM1415 130.2h1v1.6h-1zM1439 130.2h1v1.6h-1zM1444 130.2h1v1.6h-1zM1415 132.2h1v1.6h-1zM1439 132.2h1v1.6h-1zM1444 132.2h1v1.6h-1zM1415 134.2h1v1.6h-1zM1417 134.2h1v1.6h-1zM1432 134.2h1v1.6h-1zM1400 138.2h1v1.6h-1zM1402 138.2h1v1.6h-1zM1405 140.2h1v1.6h-1zM1395 142.2h1v1.6h-1zM1393 144.2h1v1.6h-1zM1430 150.2h1v1.6h-1zM1416 152.2h1v1.6h-1zM1416 154.2h1v1.6h-1zM1440 154.2h1v1.6h-1zM1445 154.2h1v1.6h-1zM1416 156.2h1v1.6h-1zM1441 156.2h1v1.6h-1zM1446 156.2h1v1.6h-1zM1416 158.2h1v1.6h-1zM1418 158.2h1v1.6h-1zM1433 158.2h1v1.6h-1zM1393 160.2h1v1.6h-1zM1432 166.2h1v1.6h-1zM1416 168.2h1v1.6h-1zM1416 170.2h1v1.6h-1zM1440 170.2h1v1.6h-1zM1445 170.2h1v1.6h-1zM1416 172.2h1v1.6h-1zM1441 172.2h1v1.6h-1zM1446 172.2h1v1.6h-1zM1416 174.2h1v1.6h-1zM1418 174.2h1v1.6h-1zM1433 174.2h1v1.6h-1zM1393 176.2h1v1.6h-1zM1433 182.2h1v1.6h-1zM1416 184.2h1v1.6h-1zM1416 186.2h1v1.6h-1zM1440 186.2h1v1.6h-1zM1445 186.2h1v1.6h-1zM1416 188.2h1v1.6h-1zM1441 188.2h1v1.6h-1zM1446 188.2h1v1.6h-1zM1416 190.2h1v1.6h-1zM1418 190.2h1v1.6h-1zM1433 190.2h1v1.6h-1zM1393 192.2h1v1.6h-1zM1446 204.2h1v1.6h-1zM1415 206.2h1v1.6h-1zM1415 208.2h1v1.6h-1zM1439 208.2h1v1.6h-1zM1444 208.2h1v1.6h-1zM1415 210.2h1v1.6h-1zM1439 210.2h1v1.6h-1zM1444 210.2h1v1.6h-1zM1409 214.2h1v1.6h-1zM1424 216.2h1v1.6h-1zM1424 218.2h1v1.6h-1zM1424 220.2h1v1.6h-1zM1424 222.2h1v1.6h-1zM1424 224.2h1v1.6h-1zM1424 226.2h1v1.6h-1zM1424 228.2h1v1.6h-1zM1424 230.2h1v1.6h-1zM1424 232.2h1v1.6h-1zM1395 234.2h1v1.6h-1zM1409 238.2h1v1.6h-1zM1424 240.2h1v1.6h-1zM1424 242.2h1v1.6h-1zM1424 244.2h1v1.6h-1zM1424 246.2h1v1.6h-1zM1424 248.2h1v1.6h-1zM1424 250.2h1v1.6h-1zM1424 252.2h1v1.6h-1zM1424 254.2h1v1.6h-1zM1424 256.2h1v1.6h-1zM1395 258.2h1v1.6h-1zM1400 262.2h1v1.6h-1zM1402 262.2h1v1.6h-1zM1405 264.2h1v1.6h-1zM1395 266.2h1v1.6h-1zM1393 268.2h1v1.6h-1zM1448 272.2h1v1.6h-1zM1415 274.2h1v1.6h-1zM1415 276.2h1v1.6h-1zM1439 276.2h1v1.6h-1zM1444 276.2h1v1.6h-1zM1415 278.2h1v1.6h-1zM1439 278.2h1v1.6h-1zM1444 278.2h1v1.6h-1zM1409 282.2h1v1.6h-1zM1424 284.2h1v1.6h-1zM1424 286.2h1v1.6h-1zM1424 288.2h1v1.6h-1zM1424 290.2h1v1.6h-1zM1424 292.2h1v1.6h-1zM1424 294.2h1v1.6h-1zM1424 296.2h1v1.6h-1zM1424 298.2h1v1.6h-1zM1424 300.2h1v1.6h-1zM1395 302.2h1v1.6h-1zM1400 306.2h1v1.6h-1zM1402 306.2h1v1.6h-1zM1405 308.2h1v1.6h-1zM1395 310.2h1v1.6h-1zM1393 312.2h1v1.6h-1zM1449 316.2h1v1.6h-1zM1415 318.2h1v1.6h-1zM1415 320.2h1v1.6h-1zM1439 320.2h1v1.6h-1zM1444 320.2h1v1.6h-1zM1415 322.2h1v1.6h-1zM1439 322.2h1v1.6h-1zM1444 322.2h1v1.6h-1zM1409 326.2h1v1.6h-1zM1424 328.2h1v1.6h-1zM1424 330.2h1v1.6h-1zM1424 332.2h1v1.6h-1zM1424 334.2h1v1.6h-1zM1424 336.2h1v1.6h-1zM1424 338.2h1v1.6h-1zM1424 340.2h1v1.6h-1zM1424 342.2h1v1.6h-1zM1424 344.2h1v1.6h-1zM1395 346.2h1v1.6h-1zM1400 350.2h1v1.6h-1zM1402 350.2h1v1.6h-1zM1405 352.2h1v1.6h-1zM1395 354.2h1v1.6h-1zM1393 356.2h1v1.6h-1zM1465 368.2h1v1.6h-1zM1421 370.2h1v1.6h-1zM1437 370.2h1v1.6h-1zM1446 370.2h1v1.6h-1zM1421 372.2h1v1.6h-1zM1453 372.2h1v1.6h-1zM1462 372.2h1v1.6h-1zM1393 374.2h1v1.6h-1zM1467 378.2h1v1.6h-1zM1421 380.2h1v1.6h-1zM1437 380.2h1v1.6h-1zM1448 380.2h1v1.6h-1zM1421 382.2h1v1.6h-1zM1453 382.2h1v1.6h-1zM1464 382.2h1v1.6h-1zM1393 384.2h1v1.6h-1zM1468 388.2h1v1.6h-1zM1421 390.2h1v1.6h-1zM1437 390.2h1v1.6h-1zM1449 390.2h1v1.6h-1zM1421 392.2h1v1.6h-1zM1453 392.2h1v1.6h-1zM1465 392.2h1v1.6h-1zM1393 394.2h1v1.6h-1zM1439 406.2h1v1.6h-1zM1420 410.2h1v1.6h-1zM1420 412.2h1v1.6h-1zM1444 412.2h1v1.6h-1zM1449 412.2h1v1.6h-1zM1420 414.2h1v1.6h-1zM1444 414.2h1v1.6h-1zM1449 414.2h1v1.6h-1zM1420 416.2h1v1.6h-1zM1420 418.2h1v1.6h-1zM1420 420.2h1v1.6h-1zM1427 426.2h1v1.6h-1zM1400 430.2h1v1.6h-1zM1402 430.2h1v1.6h-1zM1405 432.2h1v1.6h-1zM1395 434.2h1v1.6h-1zM1393 436.2h1v1.6h-1zM1441 440.2h1v1.6h-1zM1417 442.2h1v1.6h-1zM1417 444.2h1v1.6h-1zM1442 444.2h1v1.6h-1zM1451 444.2h1v1.6h-1zM1417 446.2h1v1.6h-1zM1393 448.2h1v1.6h-1zM1445 468.2h1v1.6h-1zM1404 470.2h1v1.6h-1zM1404 472.2h1v1.6h-1zM1409 472.2h1v1.6h-1zM1393 474.2h1v1.6h-1zM1435 478.2h1v1.6h-1zM1415 480.2h1v1.6h-1zM1415 482.2h1v1.6h-1zM1420 482.2h1v1.6h-1zM1415 484.2h1v1.6h-1zM1439 484.2h1v1.6h-1zM1455 484.2h1v1.6h-1zM1400 488.2h1v1.6h-1zM1402 488.2h1v1.6h-1zM1405 490.2h1v1.6h-1zM1395 492.2h1v1.6h-1zM1393 494.2h1v1.6h-1zM1448 518.2h1v1.6h-1zM1416 520.2h1v1.6h-1zM1441 520.2h1v1.6h-1zM1446 520.2h1v1.6h-1zM1416 522.2h1v1.6h-1zM1440 522.2h1v1.6h-1zM1456 522.2h1v1.6h-1zM1416 524.2h1v1.6h-1zM1414 530.2h1v1.6h-1zM1427 530.2h1v1.6h-1zM1436 530.2h1v1.6h-1zM1414 532.2h1v1.6h-1zM1426 532.2h1v1.6h-1zM1435 532.2h1v1.6h-1zM1414 534.2h1v1.6h-1zM1412 538.2h1v1.6h-1zM1405 540.2h1v1.6h-1zM1405 542.2h1v1.6h-1zM1395 544.2h1v1.6h-1zM1393 550.2h1v1.6h-1zM1441 574.2h1v1.6h-1zM1415 576.2h1v1.6h-1zM1415 578.2h1v1.6h-1zM1439 578.2h1v1.6h-1zM1444 578.2h1v1.6h-1zM1415 580.2h1v1.6h-1zM1439 580.2h1v1.6h-1zM1444 580.2h1v1.6h-1zM1415 582.2h1v1.6h-1zM1415 584.2h1v1.6h-1zM1400 588.2h1v1.6h-1zM1402 588.2h1v1.6h-1zM1405 590.2h1v1.6h-1zM1395 592.2h1v1.6h-1zM1393 594.2h1v1.6h-1zM1434 598.2h1v1.6h-1zM1415 600.2h1v1.6h-1zM1411 606.2h1v1.6h-1zM1413 606.2h1v1.6h-1zM1414 606.2h1v1.6h-1zM1413 608.2h1v1.6h-1zM1415 608.2h1v1.6h-1zM1416 608.2h1v1.6h-1zM1393 610.2h1v1.6h-1zM1459 616.2h1v1.6h-1zM1415 618.2h1v1.6h-1zM1415 620.2h1v1.6h-1zM1440 620.2h1v1.6h-1zM1449 620.2h1v1.6h-1zM1415 622.2h1v1.6h-1zM1440 622.2h1v1.6h-1zM1442 622.2h1v1.6h-1zM1415 624.2h1v1.6h-1zM1439 624.2h1v1.6h-1zM1444 624.2h1v1.6h-1zM1403 628.2h1v1.6h-1zM1402 630.2h1v1.6h-1zM1404 630.2h1v1.6h-1zM1408 630.2h1v1.6h-1zM1402 632.2h1v1.6h-1zM1404 632.2h1v1.6h-1zM1408 632.2h1v1.6h-1zM1393 634.2h1v1.6h-1zM1444 650.2h1v1.6h-1zM1419 652.2h1v1.6h-1zM1419 654.2h1v1.6h-1zM1443 654.2h1v1.6h-1zM1448 654.2h1v1.6h-1zM1419 656.2h1v1.6h-1zM1443 656.2h1v1.6h-1zM1448 656.2h1v1.6h-1zM1419 660.2h1v1.6h-1zM1410 664.2h1v1.6h-1zM1402 666.2h1v1.6h-1zM1395 668.2h1v1.6h-1zM1400 672.2h1v1.6h-1zM1402 672.2h1v1.6h-1zM1405 674.2h1v1.6h-1zM1395 676.2h1v1.6h-1zM1393 678.2h1v1.6h-1zM1472 682.2h1v1.6h-1zM1415 684.2h1v1.6h-1zM1415 686.2h1v1.6h-1zM1439 686.2h1v1.6h-1zM1444 686.2h1v1.6h-1zM1453 686.2h1v1.6h-1zM1415 688.2h1v1.6h-1zM1439 688.2h1v1.6h-1zM1444 688.2h1v1.6h-1zM1414 692.2h1v1.6h-1zM1433 692.2h1v1.6h-1zM1439 692.2h1v1.6h-1zM1419 696.2h1v1.6h-1zM1421 696.2h1v1.6h-1zM1395 700.2h1v1.6h-1zM1412 706.2h1v1.6h-1zM1413 708.2h1v1.6h-1zM1395 710.2h1v1.6h-1zM1393 712.2h1v1.6h-1zM1451 724.2h1v1.6h-1zM1416 726.2h1v1.6h-1zM1441 726.2h1v1.6h-1zM1450 726.2h1v1.6h-1zM1416 728.2h1v1.6h-1zM1416 730.2h1v1.6h-1zM1447 730.2h1v1.6h-1zM1452 730.2h1v1.6h-1zM1461 730.2h1v1.6h-1zM1463 730.2h1v1.6h-1zM1464 730.2h1v1.6h-1zM1393 732.2h1v1.6h-1zM1429 746.2h1v1.6h-1zM1415 748.2h1v1.6h-1zM1415 750.2h1v1.6h-1zM1439 750.2h1v1.6h-1zM1444 750.2h1v1.6h-1zM1415 752.2h1v1.6h-1zM1439 752.2h1v1.6h-1zM1444 752.2h1v1.6h-1zM1415 754.2h1v1.6h-1zM1415 756.2h1v1.6h-1zM1400 760.2h1v1.6h-1zM1402 760.2h1v1.6h-1zM1405 762.2h1v1.6h-1zM1395 764.2h1v1.6h-1zM1393 766.2h1v1.6h-1zM1437 770.2h1v1.6h-1zM1415 772.2h1v1.6h-1zM1415 774.2h1v1.6h-1zM1439 774.2h1v1.6h-1zM1444 774.2h1v1.6h-1zM1415 776.2h1v1.6h-1zM1439 776.2h1v1.6h-1zM1444 776.2h1v1.6h-1zM1412 780.2h1v1.6h-1zM1427 782.2h1v1.6h-1zM1427 784.2h1v1.6h-1zM1443 784.2h1v1.6h-1zM1452 784.2h1v1.6h-1zM1427 786.2h1v1.6h-1zM1427 788.2h1v1.6h-1zM1446 788.2h1v1.6h-1zM1451 788.2h1v1.6h-1zM1395 790.2h1v1.6h-1zM1400 794.2h1v1.6h-1zM1402 794.2h1v1.6h-1zM1405 796.2h1v1.6h-1zM1395 798.2h1v1.6h-1zM1393 800.2h1v1.6h-1zM1441 804.2h1v1.6h-1zM1427 806.2h1v1.6h-1zM1427 808.2h1v1.6h-1zM1451 808.2h1v1.6h-1zM1456 808.2h1v1.6h-1zM1427 810.2h1v1.6h-1zM1451 810.2h1v1.6h-1zM1456 810.2h1v1.6h-1zM1427 812.2h1v1.6h-1zM1427 814.2h1v1.6h-1zM1427 816.2h1v1.6h-1zM1432 816.2h1v1.6h-1zM1427 818.2h1v1.6h-1zM1417 822.2h1v1.6h-1zM1419 822.2h1v1.6h-1zM1422 824.2h1v1.6h-1zM1427 824.2h1v1.6h-1zM1395 826.2h1v1.6h-1zM1403 830.2h1v1.6h-1zM1418 832.2h1v1.6h-1zM1418 834.2h1v1.6h-1zM1395 836.2h1v1.6h-1zM1418 840.2h1v1.6h-1zM1407 842.2h1v1.6h-1zM1407 844.2h1v1.6h-1zM1407 846.2h1v1.6h-1zM1407 848.2h1v1.6h-1zM1395 850.2h1v1.6h-1zM1400 854.2h1v1.6h-1zM1402 854.2h1v1.6h-1zM1405 856.2h1v1.6h-1zM1395 858.2h1v1.6h-1zM1393 860.2h1v1.6h-1z"/><path fill="#9cdcfe" opacity="0.30" d="M1397 36.2h7v1.6h-7zM1399 38.2h6v1.6h-6zM1399 40.2h7v1.6h-7zM1395 52.2h8v1.6h-8zM1395 68.2h11v1.6h-11zM1395 70.2h4v1.6h-4zM1395 72.2h7v1.6h-7zM1395 80.2h11v1.6h-11zM1395 82.2h4v1.6h-4zM1395 84.2h7v1.6h-7zM1395 100.2h4v1.6h-4zM1395 102.2h8v1.6h-8zM1406 102.2h3v1.6h-3zM1410 102.2h8v1.6h-8zM1395 106.2h4v1.6h-4zM1397 108.2h7v1.6h-7zM1397 110.2h11v1.6h-11zM1395 128.2h4v1.6h-4zM1395 130.2h8v1.6h-8zM1417 130.2h22v1.6h-22zM1440 130.2h4v1.6h-4zM1445 130.2h8v1.6h-8zM1395 132.2h19v1.6h-19zM1417 132.2h22v1.6h-22zM1440 132.2h4v1.6h-4zM1445 132.2h4v1.6h-4zM1395 134.2h13v1.6h-13zM1395 138.2h4v1.6h-4zM1397 140.2h7v1.6h-7zM1395 152.2h4v1.6h-4zM1395 154.2h19v1.6h-19zM1418 154.2h22v1.6h-22zM1441 154.2h4v1.6h-4zM1446 154.2h4v1.6h-4zM1395 156.2h20v1.6h-20zM1418 156.2h23v1.6h-23zM1442 156.2h4v1.6h-4zM1447 156.2h4v1.6h-4zM1395 158.2h16v1.6h-16zM1395 168.2h4v1.6h-4zM1395 170.2h19v1.6h-19zM1418 170.2h22v1.6h-22zM1441 170.2h4v1.6h-4zM1446 170.2h4v1.6h-4zM1395 172.2h20v1.6h-20zM1418 172.2h23v1.6h-23zM1442 172.2h4v1.6h-4zM1447 172.2h4v1.6h-4zM1395 174.2h16v1.6h-16zM1395 184.2h4v1.6h-4zM1395 186.2h19v1.6h-19zM1418 186.2h22v1.6h-22zM1441 186.2h4v1.6h-4zM1446 186.2h4v1.6h-4zM1395 188.2h20v1.6h-20zM1418 188.2h23v1.6h-23zM1442 188.2h4v1.6h-4zM1447 188.2h4v1.6h-4zM1395 190.2h16v1.6h-16zM1395 206.2h4v1.6h-4zM1395 208.2h8v1.6h-8zM1417 208.2h22v1.6h-22zM1440 208.2h4v1.6h-4zM1445 208.2h8v1.6h-8zM1395 210.2h19v1.6h-19zM1417 210.2h22v1.6h-22zM1440 210.2h4v1.6h-4zM1445 210.2h4v1.6h-4zM1397 216.2h4v1.6h-4zM1397 218.2h8v1.6h-8zM1397 220.2h9v1.6h-9zM1397 222.2h6v1.6h-6zM1397 224.2h8v1.6h-8zM1397 226.2h17v1.6h-17zM1397 228.2h22v1.6h-22zM1397 230.2h21v1.6h-21zM1397 232.2h26v1.6h-26zM1397 240.2h4v1.6h-4zM1397 242.2h8v1.6h-8zM1397 244.2h9v1.6h-9zM1397 246.2h6v1.6h-6zM1397 248.2h8v1.6h-8zM1397 250.2h17v1.6h-17zM1397 252.2h22v1.6h-22zM1397 254.2h21v1.6h-21zM1397 256.2h26v1.6h-26zM1395 262.2h4v1.6h-4zM1397 264.2h7v1.6h-7zM1395 274.2h4v1.6h-4zM1395 276.2h8v1.6h-8zM1417 276.2h22v1.6h-22zM1440 276.2h4v1.6h-4zM1445 276.2h8v1.6h-8zM1395 278.2h19v1.6h-19zM1417 278.2h22v1.6h-22zM1440 278.2h4v1.6h-4zM1445 278.2h4v1.6h-4zM1397 284.2h4v1.6h-4zM1397 286.2h8v1.6h-8zM1397 288.2h9v1.6h-9zM1397 290.2h6v1.6h-6zM1397 292.2h8v1.6h-8zM1397 294.2h17v1.6h-17zM1397 296.2h22v1.6h-22zM1397 298.2h21v1.6h-21zM1397 300.2h26v1.6h-26zM1395 306.2h4v1.6h-4zM1397 308.2h7v1.6h-7zM1395 318.2h4v1.6h-4zM1395 320.2h8v1.6h-8zM1417 320.2h22v1.6h-22zM1440 320.2h4v1.6h-4zM1445 320.2h8v1.6h-8zM1395 322.2h19v1.6h-19zM1417 322.2h22v1.6h-22zM1440 322.2h4v1.6h-4zM1445 322.2h4v1.6h-4zM1397 328.2h4v1.6h-4zM1397 330.2h8v1.6h-8zM1397 332.2h9v1.6h-9zM1397 334.2h6v1.6h-6zM1397 336.2h8v1.6h-8zM1397 338.2h17v1.6h-17zM1397 340.2h22v1.6h-22zM1397 342.2h21v1.6h-21zM1397 344.2h26v1.6h-26zM1395 350.2h4v1.6h-4zM1397 352.2h7v1.6h-7zM1395 370.2h9v1.6h-9zM1423 370.2h14v1.6h-14zM1438 370.2h8v1.6h-8zM1447 370.2h2v1.6h-2zM1395 372.2h25v1.6h-25zM1423 372.2h30v1.6h-30zM1454 372.2h8v1.6h-8zM1463 372.2h2v1.6h-2zM1395 380.2h9v1.6h-9zM1423 380.2h14v1.6h-14zM1438 380.2h10v1.6h-10zM1449 380.2h2v1.6h-2zM1395 382.2h25v1.6h-25zM1423 382.2h30v1.6h-30zM1454 382.2h10v1.6h-10zM1465 382.2h2v1.6h-2zM1395 390.2h9v1.6h-9zM1423 390.2h14v1.6h-14zM1438 390.2h11v1.6h-11zM1450 390.2h2v1.6h-2zM1395 392.2h25v1.6h-25zM1423 392.2h30v1.6h-30zM1454 392.2h11v1.6h-11zM1466 392.2h2v1.6h-2zM1395 410.2h4v1.6h-4zM1395 412.2h19v1.6h-19zM1422 412.2h22v1.6h-22zM1445 412.2h4v1.6h-4zM1450 412.2h4v1.6h-4zM1395 414.2h8v1.6h-8zM1422 414.2h22v1.6h-22zM1445 414.2h4v1.6h-4zM1450 414.2h8v1.6h-8zM1395 416.2h12v1.6h-12zM1395 418.2h24v1.6h-24zM1395 420.2h15v1.6h-15zM1395 426.2h31v1.6h-31zM1395 430.2h4v1.6h-4zM1397 432.2h7v1.6h-7zM1395 442.2h4v1.6h-4zM1395 444.2h20v1.6h-20zM1419 444.2h23v1.6h-23zM1443 444.2h8v1.6h-8zM1452 444.2h4v1.6h-4zM1395 446.2h21v1.6h-21zM1395 470.2h4v1.6h-4zM1395 472.2h8v1.6h-8zM1406 472.2h3v1.6h-3zM1410 472.2h8v1.6h-8zM1395 480.2h4v1.6h-4zM1395 482.2h8v1.6h-8zM1417 482.2h3v1.6h-3zM1421 482.2h8v1.6h-8zM1395 484.2h19v1.6h-19zM1417 484.2h22v1.6h-22zM1440 484.2h15v1.6h-15zM1456 484.2h4v1.6h-4zM1395 488.2h4v1.6h-4zM1397 490.2h7v1.6h-7zM1395 520.2h20v1.6h-20zM1418 520.2h23v1.6h-23zM1442 520.2h4v1.6h-4zM1447 520.2h4v1.6h-4zM1395 522.2h19v1.6h-19zM1418 522.2h22v1.6h-22zM1441 522.2h15v1.6h-15zM1457 522.2h4v1.6h-4zM1395 524.2h4v1.6h-4zM1395 530.2h18v1.6h-18zM1416 530.2h11v1.6h-11zM1428 530.2h8v1.6h-8zM1437 530.2h2v1.6h-2zM1395 532.2h18v1.6h-18zM1416 532.2h10v1.6h-10zM1427 532.2h8v1.6h-8zM1436 532.2h2v1.6h-2zM1395 534.2h7v1.6h-7zM1397 540.2h7v1.6h-7zM1397 542.2h4v1.6h-4zM1395 576.2h4v1.6h-4zM1395 578.2h8v1.6h-8zM1417 578.2h22v1.6h-22zM1440 578.2h4v1.6h-4zM1445 578.2h8v1.6h-8zM1395 580.2h19v1.6h-19zM1417 580.2h22v1.6h-22zM1440 580.2h4v1.6h-4zM1445 580.2h4v1.6h-4zM1395 582.2h3v1.6h-3zM1395 584.2h17v1.6h-17zM1395 588.2h4v1.6h-4zM1397 590.2h7v1.6h-7zM1395 600.2h4v1.6h-4zM1395 602.2h48v1.6h-48zM1395 604.2h54v1.6h-54zM1395 606.2h15v1.6h-15zM1395 608.2h15v1.6h-15zM1395 618.2h4v1.6h-4zM1395 620.2h11v1.6h-11zM1417 620.2h23v1.6h-23zM1441 620.2h8v1.6h-8zM1450 620.2h4v1.6h-4zM1395 622.2h9v1.6h-9zM1417 622.2h23v1.6h-23zM1441 622.2h1v1.6h-1zM1443 622.2h2v1.6h-2zM1395 624.2h19v1.6h-19zM1417 624.2h22v1.6h-22zM1440 624.2h4v1.6h-4zM1445 624.2h4v1.6h-4zM1395 628.2h7v1.6h-7zM1395 630.2h4v1.6h-4zM1405 630.2h3v1.6h-3zM1395 632.2h6v1.6h-6zM1405 632.2h3v1.6h-3zM1395 652.2h4v1.6h-4zM1395 654.2h8v1.6h-8zM1421 654.2h22v1.6h-22zM1444 654.2h4v1.6h-4zM1449 654.2h8v1.6h-8zM1395 656.2h19v1.6h-19zM1421 656.2h22v1.6h-22zM1444 656.2h4v1.6h-4zM1449 656.2h4v1.6h-4zM1395 658.2h48v1.6h-48zM1395 660.2h10v1.6h-10zM1397 666.2h4v1.6h-4zM1395 672.2h4v1.6h-4zM1397 674.2h7v1.6h-7zM1395 684.2h4v1.6h-4zM1395 686.2h19v1.6h-19zM1417 686.2h22v1.6h-22zM1440 686.2h4v1.6h-4zM1445 686.2h8v1.6h-8zM1454 686.2h2v1.6h-2zM1395 688.2h19v1.6h-19zM1417 688.2h22v1.6h-22zM1440 688.2h4v1.6h-4zM1445 688.2h4v1.6h-4zM1395 692.2h18v1.6h-18zM1416 692.2h17v1.6h-17zM1434 692.2h5v1.6h-5zM1440 692.2h2v1.6h-2zM1395 696.2h23v1.6h-23zM1397 708.2h11v1.6h-11zM1395 726.2h5v1.6h-5zM1418 726.2h23v1.6h-23zM1442 726.2h8v1.6h-8zM1451 726.2h2v1.6h-2zM1395 728.2h20v1.6h-20zM1395 730.2h12v1.6h-12zM1418 730.2h29v1.6h-29zM1448 730.2h4v1.6h-4zM1453 730.2h8v1.6h-8zM1465 730.2h12v1.6h-12zM1395 748.2h4v1.6h-4zM1395 750.2h8v1.6h-8zM1417 750.2h22v1.6h-22zM1440 750.2h4v1.6h-4zM1445 750.2h8v1.6h-8zM1395 752.2h19v1.6h-19zM1417 752.2h22v1.6h-22zM1440 752.2h4v1.6h-4zM1445 752.2h4v1.6h-4zM1395 754.2h17v1.6h-17zM1395 756.2h3v1.6h-3zM1395 760.2h4v1.6h-4zM1397 762.2h7v1.6h-7zM1395 772.2h4v1.6h-4zM1395 774.2h8v1.6h-8zM1417 774.2h22v1.6h-22zM1440 774.2h4v1.6h-4zM1445 774.2h8v1.6h-8zM1395 776.2h19v1.6h-19zM1417 776.2h22v1.6h-22zM1440 776.2h4v1.6h-4zM1445 776.2h4v1.6h-4zM1397 782.2h4v1.6h-4zM1397 784.2h9v1.6h-9zM1429 784.2h14v1.6h-14zM1444 784.2h8v1.6h-8zM1453 784.2h2v1.6h-2zM1397 786.2h29v1.6h-29zM1397 788.2h20v1.6h-20zM1429 788.2h17v1.6h-17zM1447 788.2h4v1.6h-4zM1452 788.2h2v1.6h-2zM1395 794.2h4v1.6h-4zM1397 796.2h7v1.6h-7zM1395 806.2h4v1.6h-4zM1395 808.2h8v1.6h-8zM1429 808.2h22v1.6h-22zM1452 808.2h4v1.6h-4zM1457 808.2h8v1.6h-8zM1395 810.2h19v1.6h-19zM1429 810.2h22v1.6h-22zM1452 810.2h4v1.6h-4zM1457 810.2h4v1.6h-4zM1395 812.2h4v1.6h-4zM1395 814.2h14v1.6h-14zM1395 816.2h14v1.6h-14zM1429 816.2h3v1.6h-3zM1433 816.2h14v1.6h-14zM1395 818.2h31v1.6h-31zM1395 822.2h21v1.6h-21zM1397 824.2h25v1.6h-25zM1423 824.2h4v1.6h-4zM1428 824.2h2v1.6h-2zM1397 832.2h7v1.6h-7zM1397 834.2h20v1.6h-20zM1397 842.2h9v1.6h-9zM1397 844.2h5v1.6h-5zM1397 846.2h3v1.6h-3zM1397 848.2h7v1.6h-7zM1395 854.2h4v1.6h-4zM1397 856.2h7v1.6h-7z"/><path fill="#ce9178" opacity="0.30" d="M1409 38.2h19v1.6h-19zM1409 40.2h3v1.6h-3zM1413 40.2h4v1.6h-4zM1409 68.2h6v1.6h-6zM1416 68.2h6v1.6h-6zM1423 68.2h3v1.6h-3zM1427 68.2h3v1.6h-3zM1431 68.2h5v1.6h-5zM1437 68.2h4v1.6h-4zM1442 68.2h4v1.6h-4zM1447 68.2h3v1.6h-3zM1451 68.2h4v1.6h-4zM1456 68.2h3v1.6h-3zM1460 68.2h7v1.6h-7zM1468 68.2h6v1.6h-6zM1409 72.2h5v1.6h-5zM1409 80.2h6v1.6h-6zM1416 80.2h7v1.6h-7zM1409 84.2h7v1.6h-7zM1406 100.2h22v1.6h-22zM1411 108.2h19v1.6h-19zM1411 110.2h6v1.6h-6zM1417 128.2h18v1.6h-18zM1418 134.2h14v1.6h-14zM1407 140.2h19v1.6h-19zM1418 152.2h15v1.6h-15zM1419 158.2h14v1.6h-14zM1418 168.2h17v1.6h-17zM1419 174.2h14v1.6h-14zM1418 184.2h18v1.6h-18zM1419 190.2h14v1.6h-14zM1417 206.2h14v1.6h-14zM1426 216.2h19v1.6h-19zM1426 220.2h9v1.6h-9zM1426 222.2h7v1.6h-7zM1426 224.2h5v1.6h-5zM1426 226.2h3v1.6h-3zM1426 228.2h4v1.6h-4zM1426 230.2h3v1.6h-3zM1426 232.2h3v1.6h-3zM1426 240.2h19v1.6h-19zM1426 244.2h9v1.6h-9zM1426 246.2h7v1.6h-7zM1426 248.2h5v1.6h-5zM1426 250.2h3v1.6h-3zM1426 252.2h5v1.6h-5zM1426 254.2h3v1.6h-3zM1426 256.2h3v1.6h-3zM1407 264.2h19v1.6h-19zM1417 274.2h16v1.6h-16zM1426 284.2h19v1.6h-19zM1426 288.2h9v1.6h-9zM1426 290.2h7v1.6h-7zM1426 292.2h5v1.6h-5zM1426 294.2h3v1.6h-3zM1426 296.2h5v1.6h-5zM1426 298.2h3v1.6h-3zM1426 300.2h3v1.6h-3zM1407 308.2h19v1.6h-19zM1417 318.2h17v1.6h-17zM1426 328.2h19v1.6h-19zM1426 332.2h9v1.6h-9zM1426 334.2h7v1.6h-7zM1426 336.2h5v1.6h-5zM1426 338.2h3v1.6h-3zM1426 340.2h5v1.6h-5zM1426 342.2h3v1.6h-3zM1426 344.2h3v1.6h-3zM1407 352.2h19v1.6h-19zM1422 410.2h21v1.6h-21zM1422 416.2h10v1.6h-10zM1422 418.2h5v1.6h-5zM1422 420.2h8v1.6h-8zM1407 432.2h19v1.6h-19zM1419 442.2h30v1.6h-30zM1419 446.2h9v1.6h-9zM1406 470.2h25v1.6h-25zM1417 480.2h16v1.6h-16zM1407 490.2h19v1.6h-19zM1418 524.2h23v1.6h-23zM1417 576.2h19v1.6h-19zM1417 582.2h11v1.6h-11zM1407 590.2h19v1.6h-19zM1417 600.2h17v1.6h-17zM1417 618.2h20v1.6h-20zM1421 652.2h15v1.6h-15zM1421 660.2h21v1.6h-21zM1404 666.2h17v1.6h-17zM1407 674.2h19v1.6h-19zM1417 684.2h21v1.6h-21zM1397 698.2h35v1.6h-35zM1415 708.2h64v1.6h-64zM1418 728.2h8v1.6h-8zM1427 728.2h4v1.6h-4zM1432 728.2h4v1.6h-4zM1437 728.2h7v1.6h-7zM1417 748.2h13v1.6h-13zM1417 754.2h8v1.6h-8zM1417 756.2h10v1.6h-10zM1407 762.2h19v1.6h-19zM1417 772.2h13v1.6h-13zM1429 782.2h15v1.6h-15zM1429 786.2h9v1.6h-9zM1407 796.2h19v1.6h-19zM1429 806.2h15v1.6h-15zM1429 812.2h14v1.6h-14zM1429 814.2h11v1.6h-11zM1420 832.2h11v1.6h-11zM1420 834.2h14v1.6h-14zM1409 842.2h11v1.6h-11zM1409 844.2h30v1.6h-30zM1409 846.2h16v1.6h-16zM1409 848.2h8v1.6h-8zM1407 856.2h19v1.6h-19z"/><path fill="#4fc1ff" opacity="0.30" d="M1402 50.2h9v1.6h-9zM1402 66.2h15v1.6h-15zM1402 78.2h10v1.6h-10zM1402 98.2h24v1.6h-24zM1427 98.2h6v1.6h-6zM1402 126.2h25v1.6h-25zM1428 126.2h6v1.6h-6zM1402 150.2h16v1.6h-16zM1419 150.2h10v1.6h-10zM1402 166.2h16v1.6h-16zM1419 166.2h12v1.6h-12zM1402 182.2h16v1.6h-16zM1419 182.2h13v1.6h-13zM1402 204.2h32v1.6h-32zM1435 204.2h10v1.6h-10zM1402 272.2h32v1.6h-32zM1435 272.2h12v1.6h-12zM1402 316.2h32v1.6h-32zM1435 316.2h13v1.6h-13zM1402 368.2h51v1.6h-51zM1454 368.2h10v1.6h-10zM1402 378.2h51v1.6h-51zM1454 378.2h12v1.6h-12zM1402 388.2h51v1.6h-51zM1454 388.2h13v1.6h-13zM1402 406.2h25v1.6h-25zM1428 406.2h10v1.6h-10zM1402 440.2h27v1.6h-27zM1430 440.2h10v1.6h-10zM1402 468.2h24v1.6h-24zM1427 468.2h17v1.6h-17zM1402 478.2h25v1.6h-25zM1428 478.2h6v1.6h-6zM1402 518.2h34v1.6h-34zM1437 518.2h10v1.6h-10zM1402 574.2h27v1.6h-27zM1430 574.2h10v1.6h-10zM1402 598.2h21v1.6h-21zM1424 598.2h9v1.6h-9zM1402 616.2h40v1.6h-40zM1443 616.2h15v1.6h-15zM1402 650.2h30v1.6h-30zM1433 650.2h10v1.6h-10zM1402 682.2h58v1.6h-58zM1461 682.2h10v1.6h-10zM1402 724.2h25v1.6h-25zM1428 724.2h22v1.6h-22zM1402 746.2h19v1.6h-19zM1422 746.2h6v1.6h-6zM1402 770.2h27v1.6h-27zM1430 770.2h6v1.6h-6zM1402 804.2h31v1.6h-31zM1434 804.2h6v1.6h-6z"/><path fill="#569cd6" opacity="0.30" d="M1409 70.2h6v1.6h-6zM1409 82.2h6v1.6h-6zM1429 426.2h5v1.6h-5zM1416 534.2h4v1.6h-4zM1407 540.2h4v1.6h-4zM1405 628.2h4v1.6h-4zM1429 818.2h5v1.6h-5z"/><path fill="#b5cea8" opacity="0.30" d="M1426 218.2h3v1.6h-3zM1426 242.2h3v1.6h-3zM1426 286.2h3v1.6h-3zM1426 330.2h3v1.6h-3zM1407 542.2h1v1.6h-1zM1417 584.2h2v1.6h-2zM1462 730.2h1v1.6h-1z"/></g>
<rect x="1393" y="444" width="110" height="2" fill="#7d6520"/>
<rect x="1393" y="602" width="110" height="4" fill="#7d6520"/>
<rect x="1393" y="658" width="110" height="2" fill="#7d6520"/>
<rect x="1395" y="444" width="63" height="2" fill="#d3a516"/>
<rect x="1395" y="602" width="64" height="2" fill="#d3a516"/>
<rect x="1395" y="604" width="56" height="2" fill="#d3a516"/>
<rect x="1395" y="658" width="62" height="2" fill="#d3a516"/>
<rect x="1515" y="545" width="3" height="6" fill="#d7b21c"/>
<rect x="1515" y="741" width="3" height="7" fill="#d7b21c"/>
<rect x="1515" y="809" width="3" height="7" fill="#d7b21c"/>
<rect x="1505" y="4" width="13" height="2" fill="#979797"/>
</svg>
<div class="ruler"></div>

<div style="position:absolute;left:0;top:1201px;width:1518px;height:1px;background:#1c1815"></div>
<div class="sb">
<div style="position:absolute;left:0;top:0;width:1518px;height:1px;background:#2281d9"></div>
<span style="left:-1px">s ready, click to restart.</span>
<span style="left:879px">Ln 1, Col 1</span>
<span style="left:972px">Spaces: 2</span>
<span style="left:1059px">UTF-8</span>
<span style="left:1121px">LF</span>
<span class="br" style="left:1158px">{ }</span>
<span style="left:1185px">Terraform</span>
<span style="left:1260px;width:126px;background:#0f3e6d;height:25px"></span>
<svg style="position:absolute;left:1270px;top:5px" width="20" height="17" viewBox="0 0 20 17">
<path fill="#fff" d="M0.3 11.2Q0.3 8.2 3.2 7.4L16.8 7.4Q19.7 8.2 19.7 11.2L19.7 13Q19.7 16.8 10 16.8Q0.3 16.8 0.3 13Z"/>
<rect x="2.2" y="0.3" width="7.6" height="8.6" rx="3.2" fill="#fff"/>
<rect x="10.2" y="0.3" width="7.6" height="8.6" rx="3.2" fill="#fff"/>
<rect x="4.1" y="2.1" width="3.8" height="4.6" rx="1.6" fill="#0f3e6d"/>
<rect x="12.1" y="2.1" width="3.8" height="4.6" rx="1.6" fill="#0f3e6d"/>
<rect x="6.4" y="10.6" width="1.6" height="3.2" fill="#0f3e6d"/>
<rect x="12" y="10.6" width="1.6" height="3.2" fill="#0f3e6d"/>
</svg>
<span style="left:1292px">Finish Setup</span>
<svg style="position:absolute;left:1396px;top:7px" width="18" height="13" viewBox="0 0 19 14">
<g fill="none" stroke="#fff" stroke-width="1.3" stroke-linecap="round">
<path d="M3.2 1.2C1.6 2.8 1 4.8 1 7s.6 4.2 2.2 5.8"/>
<path d="M15.8 1.2C17.4 2.8 18 4.8 18 7s-.6 4.2-2.2 5.8"/>
<path d="M5.9 3.2C5 4.2 4.5 5.5 4.5 7s.5 2.8 1.4 3.8"/>
<path d="M13.1 3.2c.9 1 1.4 2.3 1.4 3.8s-.5 2.8-1.4 3.8"/>
</g>
<circle cx="9.5" cy="7" r="1.3" fill="#fff"/>
</svg>
<span style="left:1419px;letter-spacing:-0.1px">Go Live</span>
<div style="position:absolute;left:1508px;top:15px;width:10px;height:10px;background:radial-gradient(circle at 2px 2px, transparent 7.6px, #1b2a2a 8.4px)"></div>
<svg style="position:absolute;left:1490px;top:3px" width="18" height="19" viewBox="0 0 18 19">
<path fill="none" stroke="#fff" stroke-width="1.25" stroke-linejoin="round" d="M8.8 3.6c-3 0-5.2 2.1-5.2 5.2v4.6c0 .8-.5 1.5-1.6 2.6h13.6c-1.1-1.1-1.6-1.8-1.6-2.6V8.8c0-3.1-2.2-5.2-5.2-5.2z"/>
<path fill="none" stroke="#fff" stroke-width="1.25" d="M7.1 16.2c0 1 .8 1.8 1.7 1.8s1.7-.8 1.7-1.8"/>
</svg>
</div>

</body></html>
